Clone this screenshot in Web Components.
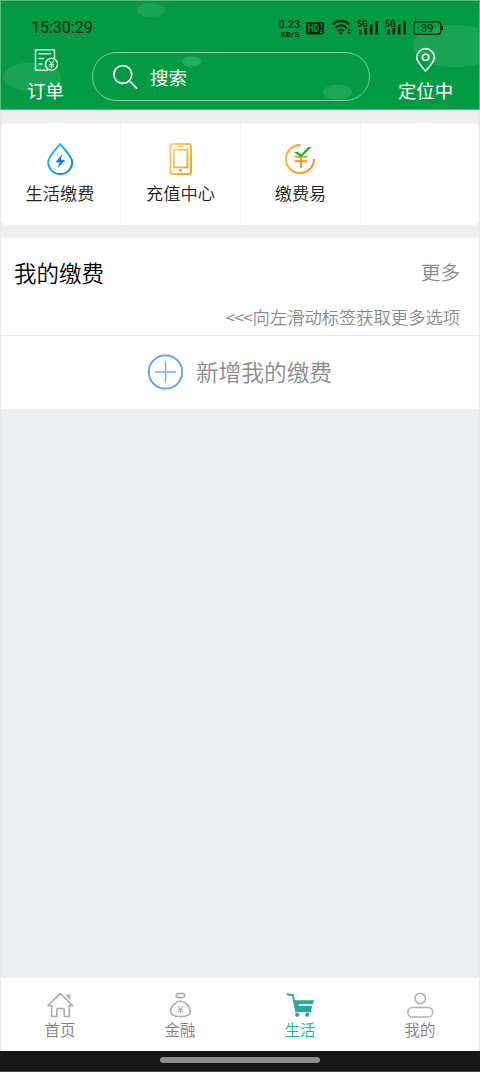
<!DOCTYPE html>
<html lang="zh-CN">
<head>
<meta charset="utf-8">
<title>生活</title>
<style>
html,body{margin:0;height:100%}
body{font-family:"Noto Sans CJK SC DemiLight","Noto Sans CJK SC","Noto Sans",sans-serif;font-weight:350;background:#eeeff1;width:480px;overflow:hidden}
</style>
</head>
<body>
<life-app></life-app>
<script>
const define=(name,html)=>customElements.define(name,class extends HTMLElement{
  constructor(){super();this.attachShadow({mode:'open'}).innerHTML=html;}
});

define('status-bar',`<style>
:host{display:flex;align-items:center;height:46px;box-sizing:border-box;padding:10px 37px 0 31px;color:#03230f;font-family:Roboto,sans-serif}
time{font-size:16px;line-height:20px;font-weight:400;margin-right:auto}
svg{display:block;flex:none}
.net{margin-right:3px}
</style>
<time>15:30:29</time>
<svg class="net" width="24" height="20" viewBox="278 18 24 20" fill="#03230f"><text x="278.600" y="27.800" font-size="10.500" font-weight="500" textLength="21.600" lengthAdjust="spacingAndGlyphs">0.23</text><text x="280.600" y="36.500" font-size="7.500" font-weight="500" textLength="18.600" lengthAdjust="spacingAndGlyphs">KB/S</text></svg>
<svg width="138" height="18" viewBox="305 19 138 18" fill="none" stroke="#03230f">
<rect x="306" y="22" width="18" height="12.500" rx="2" fill="#03230f" stroke="none"/>
<text x="307.600" y="32" font-size="10" font-weight="700" textLength="11.500" lengthAdjust="spacingAndGlyphs" fill="#029b44" stroke="none">HD</text>
<path d="M320.200 24l1.200-.7v4.200M320 30h2.200l-2 2.600h2.400" stroke="#029b44"/>
<path d="M332.500 24.500Q341 17.300 349.500 24.500M335.300 27.800Q341 23 346.700 27.800M338 30.800Q341 28.600 344 30.800" stroke-width="2"/>
<circle cx="341" cy="33" r="1.500" fill="#03230f" stroke="none"/>
<path d="M347.200 30.500l2-2.200 2 2.200zm0 1.800h4l-2 2.200z" fill="#03230f" stroke="none"/>
<g id="s"><text x="357.300" y="26.900" font-size="9" font-weight="700" fill="#03230f" stroke="none" textLength="10.400" lengthAdjust="spacingAndGlyphs">5G</text>
<path d="M360.300 30v4.500M365.800 28v6.500M371.200 24.500v10M376.700 21v13.500" stroke-width="2.600"/></g>
<use href="#s" x="28"/>
<rect x="413.800" y="21.800" width="27" height="12.600" rx="3.400" stroke-width="1.300"/><path d="M442.200 26v4" stroke-width="1.800"/>
<text x="421" y="32" font-size="11" fill="#03230f" stroke="none">39</text>
</svg>`);

define('app-header',`<style>
:host{display:grid;height:110px;box-sizing:border-box;border:1px solid #5bbb7f;position:relative;background:#029b44;color:#fff;grid-template-rows:45px 1fr;overflow:hidden;font-weight:400;font-family:"Noto Sans CJK SC",sans-serif}
.bg{position:absolute;left:-1px;top:-1px}
status-bar{position:relative;margin:-1px -1px 0}
.row{position:relative;display:grid;grid-template-columns:91px 278px 1fr;align-items:start}
.act{display:grid;justify-items:center;font-size:18.400px;line-height:28px;white-space:nowrap;row-gap:2px}
.act:first-child{margin-right:2px}.act:last-child{margin-left:1px;margin-right:-1px}
.act svg{display:block}
.search{margin-top:6px;height:49px;box-sizing:border-box;border:1px solid #83cda0;border-radius:25px;display:flex;align-items:center;padding-left:19px;font-size:18.500px;gap:12px;line-height:26px}
</style>
<svg class="bg" width="480" height="110" fill="#fff"><g fill-opacity=".09"><ellipse cx="32" cy="77" rx="29" ry="14.500"/><ellipse cx="151" cy="10" rx="14" ry="7"/><ellipse cx="455" cy="46" rx="42" ry="21.500"/></g><ellipse cx="191.500" cy="61.500" rx="9.500" ry="5" fill-opacity=".16"/><ellipse cx="337.500" cy="92" rx="14.500" ry="7.500" fill-opacity=".11"/></svg>
<status-bar></status-bar>
<div class="row">
<div class="act"><svg width="26" height="28" viewBox="32.500 46.500 26 28" fill="none" stroke="#d4eddd" stroke-width="1.500" stroke-linecap="round" stroke-linejoin="round"><path d="M54 58.500v-7.500q0-.7-.7-.7H35.700q-.7 0-.7.7v19q0 .7.700.7H47M38.500 54.300H50M38.500 59H43M38.500 64.500h3"/><circle cx="51" cy="64.800" r="6"/><path d="M48.800 61.700l2.200 2.500 2.200-2.500M51 64.200v4M49 65h4M49 66.700h4" stroke-width="1.100"/></svg><span>订单</span></div>
<div class="search"><svg width="26" height="26" viewBox="112 63.500 26 26" fill="none" stroke="#fff" stroke-width="1.700" stroke-linecap="round"><circle cx="122.800" cy="74" r="8.900"/><path d="M130.700 81.700l5.900 5.900"/></svg><span>搜索</span></div>
<div class="act"><svg width="22" height="28" viewBox="415 46 22 28" fill="none" stroke="#e8f6ed" stroke-width="1.700" stroke-linejoin="round"><path d="M425.600 71C420 64.500 416.800 61.500 416.800 57.500a8.800 8.800 0 0 1 17.600 0C434.400 61.500 431.200 64.500 425.600 71z"/><circle cx="425.600" cy="57.300" r="3.200"/></svg><span>定位中</span></div>
</div>`);

define('service-tile',`<style>
:host{display:grid;grid-template-rows:34px 26px;row-gap:4px;align-content:start;justify-items:center;box-sizing:border-box;padding-top:19px;font-size:17.200px;line-height:26px;color:#222;white-space:nowrap}
:host(:not(:first-of-type)){border-left:1px solid #f4f4f5}
</style><slot name="icon"></slot><span><slot></slot></span>`);

define('service-card',`<style>
:host{display:grid;grid-template-columns:repeat(4,120px);height:102px;margin-top:13px;background:#fff;border-radius:8px;overflow:hidden}
svg{display:block}
</style>
<service-tile><svg slot="icon" width="30" height="34" viewBox="45 142 30 34"><defs><linearGradient id="b" x2="1" y2="1"><stop stop-color="#18c8fa"/><stop offset="1" stop-color="#087cf4"/></linearGradient></defs><path d="M60.200 144C56 149.500 48.200 156 48.200 162.200a12 11.900 0 0 0 24 0C72.200 156 64.400 149.500 60.200 144z" fill="none" stroke="url(#b)" stroke-width="2" stroke-linejoin="round"/><path d="M62.600 153.700l-7.200 8.500 4.200.4-1.900 5.700 7.400-8.300-4.400-.6z" fill="#087ff6"/></svg>生活缴费</service-tile>
<service-tile><svg slot="icon" width="30" height="34" viewBox="166 142 30 34" fill="none" stroke="url(#p)"><defs><linearGradient id="p" x2="1" y2="1"><stop stop-color="#ffd477"/><stop offset="1" stop-color="#f9a20b"/></linearGradient></defs><rect x="170.400" y="143.900" width="20.600" height="30" rx="2.200" stroke-width="2"/><rect x="173.800" y="149.800" width="13.600" height="17.600" stroke-width="1.800"/><path d="M178 146h5" stroke="#f8c45d" stroke-width="1.400"/><circle cx="180.500" cy="170.500" r="1.400" fill="#f59d13" stroke="none"/></svg>充值中心</service-tile>
<service-tile><svg slot="icon" width="34" height="34" viewBox="284 142 34 34" fill="none"><defs><linearGradient id="c" x2="1"><stop stop-color="#ffb52e"/><stop offset="1" stop-color="#f5891a"/></linearGradient></defs><path d="M300.500 145A14 14 0 1 0 314 159" stroke="url(#c)" stroke-width="2"/><path d="M294.500 156.700h13M294.500 161.200h13M301 155v12.800" stroke="#f6961d" stroke-width="1.900"/><path d="M294 152.300l3.800-.5 3.500 2.700 6.500-7.200 4-.3-10.800 10.300z" fill="#10bd19"/></svg>缴费易</service-tile>
<service-tile></service-tile>`);

define('payment-panel',`<style>
:host{display:grid;grid-template-rows:67px 31px 1fr;height:171px;margin-top:13px;background:#fff;box-sizing:border-box;white-space:nowrap}
header{display:flex;justify-content:space-between;align-items:center;padding:0 20px 0 14px}
h2{font-size:22.500px;line-height:32px;font-weight:inherit;color:#000;margin:0}
a{font-size:19.500px;line-height:30px;color:#8a8a8a}
p{margin:0;border-bottom:1px solid #e9e9ea;display:flex;justify-content:flex-end;padding-right:20px;font-size:17.300px;line-height:24px;color:#8a8a8a}
p span{letter-spacing:-.5px}
.add{display:flex;align-items:center;justify-content:center;gap:12px;color:#8a8a8a;font-size:22.700px;line-height:32px;padding-bottom:1px}
svg{display:block}
</style>
<header><h2>我的缴费</h2><a>更多</a></header>
<p><span>&lt;&lt;&lt;</span>向左滑动标签获取更多选项</p>
<div class="add"><svg width="36" height="36" fill="none" stroke="#569ff0"><circle cx="17.500" cy="18" r="16.700" stroke-width="1.800"/><path d="M7 18h21M17.500 7.500v21" stroke="#72b0f4" stroke-width="1.500"/></svg><span>新增我的缴费</span></div>`);

define('tab-item',`<style>
:host{display:grid;grid-template-rows:25px 24px;align-content:start;justify-items:center;padding-top:14px;font-size:15.400px;line-height:24px;color:#7f7f7f;white-space:nowrap}
:host([active]){color:#14b59c}
</style><slot name="icon"></slot><span><slot></slot></span>`);

define('tab-bar',`<style>
:host{display:grid;grid-template-columns:repeat(4,120px);height:73px;background:#fff}
svg{display:block}
</style>
<tab-item><svg slot="icon" width="30" height="28" viewBox="45 992 30 28" fill="none" stroke="#adadad" stroke-width="1.600" stroke-linejoin="round"><path d="M48 1005.500L60.300 993.700 72.600 1005.500H69.300V1016.500H64.200V1009.500Q64.200 1008.500 63.200 1008.500H57.800Q56.800 1008.500 56.800 1009.500V1016.500H51.700V1005.500z"/><path d="M65.300 994.600h5v5.800z" fill="#adadad" stroke="none"/></svg>首页</tab-item>
<tab-item><svg slot="icon" width="30" height="28" viewBox="165 992 30 28" fill="none" stroke="#adadad" stroke-width="1.600"><ellipse cx="180.500" cy="995.500" rx="4.300" ry="2.100"/><path d="M180.300 1001C176.300 1001 170.500 1006.500 170.500 1011.500C170.500 1015.300 173.500 1016.500 180.300 1016.500S190.300 1015.300 190.300 1011.500C190.300 1006.500 184.500 1001 180.300 1001z"/><path d="M177.800 1006l2.600 3.300 2.600-3.300M180.400 1009.300v4.200M178 1009.500h4.800M178 1011.500h4.800" stroke-width="1.100"/></svg>金融</tab-item>
<tab-item active><svg slot="icon" width="30" height="28" viewBox="285 992 30 28"><path d="M287.500 994.200l5.400 1.200 3.300 15.800h14" fill="none" stroke="#2ca69f" stroke-width="1.900" stroke-linecap="round"/><path d="M293.500 1000.300h20.500l-1.300 4h-14v1.400h13.600l-1.600 5.200h-14.700z" fill="#2ca69f"/><circle cx="297.200" cy="1014.800" r="2.100" fill="#2ca69f"/><circle cx="307.200" cy="1014.800" r="2.100" fill="#2ca69f"/></svg>生活</tab-item>
<tab-item><svg slot="icon" width="30" height="28" viewBox="405 992 30 28" fill="none" stroke="#b2b2b2" stroke-width="1.600"><circle cx="420.300" cy="998.500" r="5.200"/><rect x="407.800" y="1007.500" width="25" height="9.500" rx="4.750"/></svg>我的</tab-item>`);

define('gesture-bar',`<style>
:host{display:flex;height:21px;background:#171717;justify-content:center;align-items:center;box-sizing:border-box;border-bottom:1px solid #4b4b4b;padding-bottom:2px}
i{width:160px;height:6px;border-radius:3px;background:#8c8c8c}
</style><i></i>`);

define('life-app',`<style>
:host{display:flex;flex-direction:column;width:480px;height:1072px;background:#eeeff1;color:#333}
app-header{flex:none}
main{flex:1}
.edge{position:absolute;inset:110px auto 21px 0;width:480px;box-sizing:border-box;border:solid #e8e9ea;border-width:0 1px;pointer-events:none}
</style>
<app-header></app-header>
<main><service-card></service-card><payment-panel></payment-panel></main>
<tab-bar></tab-bar><gesture-bar></gesture-bar><div class="edge"></div>`);
</script>
</body>
</html>
